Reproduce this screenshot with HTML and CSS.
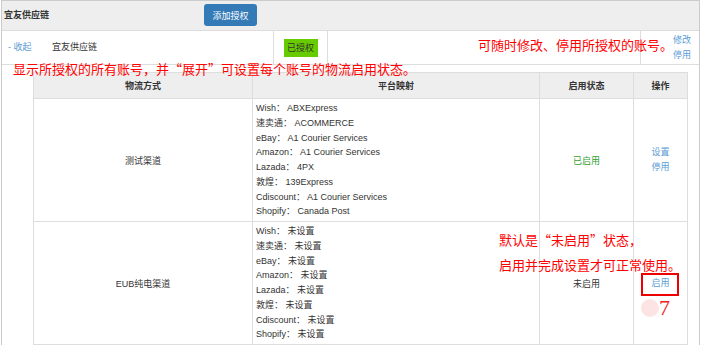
FILE: index.html
```html
<!DOCTYPE html>
<html>
	<head>
		<title>授权账号</title>
		<link rel="stylesheet" href="styles.css">
	</head>
	<body>
		<div class="page">
			<div class="panel">
				<div class="panel-head">
					<span class="panel-title">宜友供应链</span>
					<button class="btn-add">添加授权</button>
				</div>
				<div class="account-row">
					<a class="toggle">- 收起</a>
					<span class="account-name">宜友供应链</span>
					<div class="account-status"><span class="badge">已授权</span></div>
					<div class="account-spacer"></div>
					<div class="account-actions">
						<a>修改</a>
						<a>停用</a>
					</div>
				</div>
				<div class="channel-wrap">
					<table class="channel-table">
						<colgroup>
							<col style="width: 219px">
							<col style="width: 287px">
							<col style="width: 94px">
							<col>
						</colgroup>
						<thead>
							<tr>
								<th>物流方式</th>
								<th>平台映射</th>
								<th>启用状态</th>
								<th>操作</th>
							</tr>
						</thead>
						<tbody>
							<tr>
								<td>测试渠道</td>
								<td class="mapping">
									Wish： ABXExpress<br>
									速卖通： ACOMMERCE<br>
									eBay： A1 Courier Services<br>
									Amazon： A1 Courier Services<br>
									Lazada： 4PX<br>
									敦煌： 139Express<br>
									Cdiscount： A1 Courier Services<br>
									Shopify： Canada Post
								</td>
								<td class="state-on">已启用</td>
								<td class="ops"><a>设置</a><a>停用</a></td>
							</tr>
							<tr>
								<td>EUB纯电渠道</td>
								<td class="mapping">
									Wish： 未设置<br>
									速卖通： 未设置<br>
									eBay： 未设置<br>
									Amazon： 未设置<br>
									Lazada： 未设置<br>
									敦煌： 未设置<br>
									Cdiscount： 未设置<br>
									Shopify： 未设置
								</td>
								<td>未启用</td>
								<td class="ops"><a>启用</a></td>
							</tr>
						</tbody>
					</table>
				</div>
			</div>

			<!-- 标注 -->
			<div class="note note-edit">可随时修改、停用所授权的账号。</div>
			<div class="note note-expand">显示所授权的所有账号，并“展开”可设置每个账号的物流启用状态。</div>
			<div class="note note-default">默认是“未启用”状态，<br>启用并完成设置才可正常使用。</div>
			<div class="mark-box"></div>
			<div class="mark-dot"></div>
			<div class="mark-num">7</div>
		</div>
	</body>
</html>
```

FILE: styles.css
```css
body {
	margin: 0;
	font-family: "Liberation Sans", "Noto Sans CJK SC", sans-serif;
	font-size: 9px;
	color: #333;
	background: #fff;
}
a {
	color: #5a9bd5;
	cursor: pointer;
}
.page {
	position: relative;
	width: 701px;
	height: 345px;
	overflow: hidden;
}
.panel {
	margin: 0 1px;
	border: 1px solid #ccc;
}
.panel-head {
	display: flex;
	align-items: flex-start;
	height: 29px;
	background: #eee;
	border-bottom: 1px solid #ddd;
}
.panel-title {
	width: 200px;
	padding-left: 2px;
	line-height: 29px;
	font-weight: bold;
}
.btn-add {
	width: 53px;
	height: 22px;
	margin-top: 3px;
	padding: 0;
	border: none;
	border-radius: 3px;
	background: #337ab7;
	color: #fff;
	font-family: inherit;
	font-size: 9px;
}
.account-row {
	display: flex;
	height: 33px;
	border-bottom: 1px solid #ddd;
}
.toggle {
	width: 44px;
	padding-left: 6px;
	line-height: 33px;
}
.account-name {
	width: 221px;
	line-height: 33px;
}
.account-status {
	display: flex;
	align-items: center;
	justify-content: center;
	width: 53px;
	border-left: 1px solid #ddd;
	border-right: 1px solid #ddd;
}
.badge {
	width: 34px;
	height: 18px;
	line-height: 18px;
	text-align: center;
	background: #66cc00;
	color: #333;
}
.account-spacer {
	flex: 1;
}
.account-actions {
	display: flex;
	flex-direction: column;
	justify-content: center;
	width: 26px;
	padding-left: 32px;
	border-left: 1px solid #ddd;
	line-height: 15px;
}
.channel-wrap {
	padding: 7px 11px 0 31px;
}
.channel-table {
	width: 655px;
	table-layout: fixed;
	border-collapse: collapse;
}
.channel-table th,
.channel-table td {
	border: 1px solid #ddd;
	text-align: center;
	vertical-align: middle;
	padding: 0;
}
.channel-table th {
	height: 25px;
	background: #eee;
	font-weight: bold;
}
.channel-table td.mapping {
	text-align: left;
	padding: 2px 2px 2px 3px;
	line-height: 14.75px;
}
.state-on {
	color: #2e9e2e;
}
.ops a {
	display: block;
	line-height: 15px;
}
.note {
	position: absolute;
	color: #f00;
	font-family: "Noto Sans CJK SC", sans-serif;
	font-size: 13px;
	line-height: 14px;
	white-space: nowrap;
}
.note-edit {
	left: 478px;
	top: 38px;
}
.note-expand {
	left: 13px;
	top: 62px;
}
.note-default {
	left: 499px;
	top: 227px;
	line-height: 25px;
}
.mark-box {
	position: absolute;
	left: 641px;
	top: 273px;
	width: 34px;
	height: 19px;
	border: 2px solid #e00;
}
.mark-dot {
	position: absolute;
	left: 641px;
	top: 299px;
	width: 18px;
	height: 18px;
	border-radius: 50%;
	background: #fde4e4;
}
.mark-num {
	position: absolute;
	left: 659px;
	top: 297px;
	color: #e22;
	font-family: "Liberation Serif", serif;
	font-size: 22px;
	line-height: 22px;
}
```
